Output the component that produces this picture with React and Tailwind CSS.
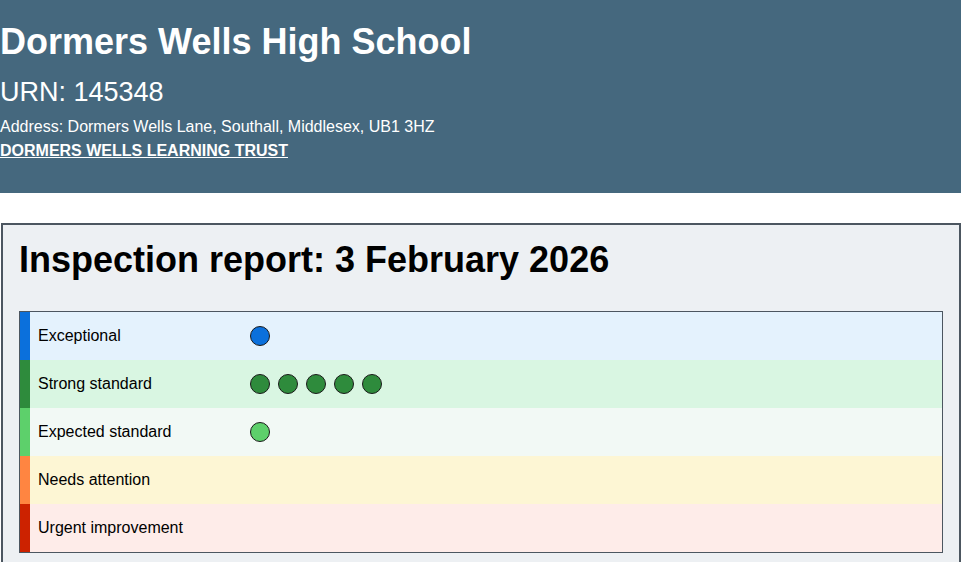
import React from 'react';

const rows = [
  { label: 'Exceptional', bar: 'bg-[#0b70dc]', bg: 'bg-[#e4f2fd]', dot: 'bg-[#0b70dc]', count: 1 },
  { label: 'Strong standard', bar: 'bg-[#2e8b3c]', bg: 'bg-[#d9f6e2]', dot: 'bg-[#2e8b3c]', count: 5 },
  { label: 'Expected standard', bar: 'bg-[#5dd06b]', bg: 'bg-[#f2f9f5]', dot: 'bg-[#5dd06b]', count: 1 },
  { label: 'Needs attention', bar: 'bg-[#ff8541]', bg: 'bg-[#fdf6d4]', dot: 'bg-[#ff8541]', count: 0 },
  { label: 'Urgent improvement', bar: 'bg-[#cc2200]', bg: 'bg-[#feece9]', dot: 'bg-[#cc2200]', count: 0 },
];

const RatingRow = ({ label, bar, bg, dot, count }) => (
  <div className={`flex items-center h-12 ${bg}`}>
    <div className={`w-[10px] h-full ${bar}`}></div>
    <div className="w-[220px] pl-2 text-base text-black">{label}</div>
    <div className="flex items-center gap-2">
      {Array.from({ length: count }).map((_, i) => (
        <span key={i} className={`block w-5 h-5 rounded-full border border-[#1a1a1a] ${dot}`}></span>
      ))}
    </div>
  </div>
);

export default function App() {
  return (
    <div className="min-h-[562px] bg-white" style={{ fontFamily: '"Liberation Sans", Arial, sans-serif' }}>
      <header className="bg-[#45687e] text-white h-[193px] pt-[22px]">
        <h1 className="text-[36px] leading-[40px] font-bold">Dormers Wells High School</h1>
        <div className="text-[27px] leading-[32px] mt-[14px]">URN: 145348</div>
        <div className="text-base leading-6 mt-[7px]">Address: Dormers Wells Lane, Southall, Middlesex, UB1 3HZ</div>
        <a href="#" className="block text-base leading-6 font-bold underline">DORMERS WELLS LEARNING TRUST</a>
      </header>

      <section className="mt-[30px] ml-px border-2 border-[#4c5660] bg-[#edf0f3] px-4 pt-[15px] pb-4">
        <h2 className="text-[36px] leading-[40px] font-bold text-black mb-[31px]">Inspection report: 3 February 2026</h2>
        <div className="border border-[#4c5660]">
          {rows.map((r) => (
            <RatingRow key={r.label} {...r} />
          ))}
        </div>
      </section>
    </div>
  );
}
